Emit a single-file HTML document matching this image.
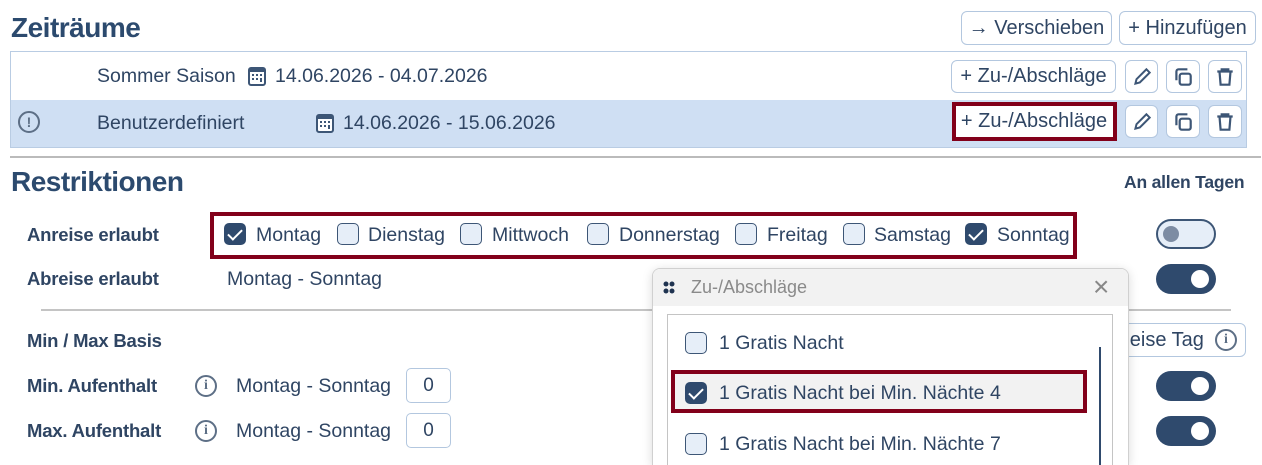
<!DOCTYPE html>
<html><head><meta charset="utf-8"><style>
*{box-sizing:border-box;margin:0;padding:0}
body{width:1262px;height:465px;overflow:hidden;background:#fff;font-family:"Liberation Sans",sans-serif;color:#2f4563;position:relative}
.a{position:absolute;white-space:nowrap}
.h{font-size:28px;font-weight:bold;color:#2c4a6e;letter-spacing:-0.5px}
.t{font-size:19.5px;line-height:22px}
.b{font-size:18.5px;font-weight:bold;line-height:20px;letter-spacing:-0.2px}
.btn{position:absolute;border:1px solid #b3c7df;border-radius:6px;background:#fff;font-size:20px;display:flex;align-items:center;justify-content:center;color:#2f4563;white-space:nowrap}
.cb{position:absolute;width:22px;height:22px;border:1.5px solid #3d5676;border-radius:5px;background:#e6eef8}
.cb.on{background:#2f4a6d;border-color:#2f4a6d}
.cb.on::after{content:"";position:absolute;left:6px;top:2px;width:6px;height:12px;border:solid #fff;border-width:0 2px 2px 0;transform:rotate(45deg)}
.tg{position:absolute;width:60px;height:30px;border-radius:15px;background:#2f4a6d}
.tg::after{content:"";position:absolute;right:7px;top:6px;width:18px;height:18px;border-radius:50%;background:#fff}
.info{position:absolute;width:22px;height:22px;border:2px solid #5d6f86;border-radius:50%;font-size:14px;font-weight:bold;text-align:center;line-height:18px;color:#5d6f86;font-family:"Liberation Serif",serif}
.inp{position:absolute;width:45px;height:35px;border:1px solid #b3c7df;border-radius:5px;font-size:19px;text-align:center;line-height:33px}
.red{position:absolute;border:4px solid #82001a}
</style></head><body>
<div class="a h" style="left:11px;top:12px">Zeiträume</div>
<div class="btn" style="left:961px;top:11px;width:151px;height:34px">→&nbsp;Verschieben</div>
<div class="btn" style="left:1119px;top:11px;width:137px;height:34px">+&nbsp;Hinzufügen</div>
<div class="a" style="left:10px;top:51px;width:1237px;height:97px;border:1px solid #b9cce3"></div>
<div class="a" style="left:11px;top:100px;width:1235px;height:47px;background:#cfdff3"></div>
<div class="a t" style="left:97px;top:65px">Sommer Saison</div>
<svg class="a" style="left:248px;top:66px" width="18" height="20" viewBox="0 0 18 20"><rect x="1" y="2" width="16" height="17" rx="2" fill="#fff" stroke="#3d5676" stroke-width="2"/><rect x="1" y="2" width="16" height="4" fill="#3d5676"/><g fill="#3d5676"><rect x="4" y="8" width="2" height="2"/><rect x="8" y="8" width="2" height="2"/><rect x="12" y="8" width="2" height="2"/><rect x="4" y="12" width="2" height="2"/><rect x="8" y="12" width="2" height="2"/><rect x="12" y="12" width="2" height="4"/></g></svg>
<div class="a t" style="left:275px;top:65px">14.06.2026 - 04.07.2026</div>
<div class="btn" style="left:951px;top:60px;width:165px;height:33px">+ Zu-/Abschläge</div>
<div class="btn" style="left:1125px;top:60px;width:33px;height:33px"><svg width="22" height="22" viewBox="0 0 20 20"><path d="M4 16l1-4 9-9 3 3-9 9z" fill="none" stroke="#3d5676" stroke-width="1.8"/></svg></div>
<div class="btn" style="left:1166px;top:60px;width:34px;height:33px"><svg width="22" height="22" viewBox="0 0 20 20"><rect x="7" y="7" width="10" height="10" rx="2" fill="none" stroke="#3d5676" stroke-width="2"/><path d="M4 13V5a2 2 0 012-2h8" fill="none" stroke="#3d5676" stroke-width="2"/></svg></div>
<div class="btn" style="left:1208px;top:60px;width:34px;height:33px"><svg width="22" height="22" viewBox="0 0 20 20"><path d="M3 5h14M7 5V3h6v2M5 5l1 12h8l1-12" fill="none" stroke="#3d5676" stroke-width="2"/></svg></div>
<div class="a" style="left:18px;top:111px;width:22px;height:22px;border:2px solid #5d6f86;border-radius:50%;text-align:center;font-weight:bold;font-size:14px;line-height:18px;color:#5d6f86">!</div>
<div class="a t" style="left:97px;top:112px">Benutzerdefiniert</div>
<svg class="a" style="left:316px;top:113px" width="18" height="20" viewBox="0 0 18 20"><rect x="1" y="2" width="16" height="17" rx="2" fill="#fff" stroke="#3d5676" stroke-width="2"/><rect x="1" y="2" width="16" height="4" fill="#3d5676"/><g fill="#3d5676"><rect x="4" y="8" width="2" height="2"/><rect x="8" y="8" width="2" height="2"/><rect x="12" y="8" width="2" height="2"/><rect x="4" y="12" width="2" height="2"/><rect x="8" y="12" width="2" height="2"/><rect x="12" y="12" width="2" height="4"/></g></svg>
<div class="a t" style="left:343px;top:112px">14.06.2026 - 15.06.2026</div>
<div class="btn" style="left:952px;top:104px;width:164px;height:35px">+ Zu-/Abschläge</div>
<div class="red" style="left:952px;top:102px;width:165px;height:39px"></div>
<div class="btn" style="left:1125px;top:105px;width:33px;height:33px"><svg width="22" height="22" viewBox="0 0 20 20"><path d="M4 16l1-4 9-9 3 3-9 9z" fill="none" stroke="#3d5676" stroke-width="1.8"/></svg></div>
<div class="btn" style="left:1166px;top:105px;width:34px;height:33px"><svg width="22" height="22" viewBox="0 0 20 20"><rect x="7" y="7" width="10" height="10" rx="2" fill="none" stroke="#3d5676" stroke-width="2"/><path d="M4 13V5a2 2 0 012-2h8" fill="none" stroke="#3d5676" stroke-width="2"/></svg></div>
<div class="btn" style="left:1208px;top:105px;width:34px;height:33px"><svg width="22" height="22" viewBox="0 0 20 20"><path d="M3 5h14M7 5V3h6v2M5 5l1 12h8l1-12" fill="none" stroke="#3d5676" stroke-width="2"/></svg></div>
<div class="a" style="left:10px;top:156px;width:1251px;height:2px;background:#bbb"></div>

<div class="a h" style="left:11px;top:166px">Restriktionen</div>
<div class="a b" style="left:1124px;top:172px;font-size:17.5px">An allen Tagen</div>
<div class="a b" style="left:27px;top:225px">Anreise erlaubt</div>
<div class="red" style="left:210px;top:212px;width:867px;height:47px"></div>
<div class="cb on" style="left:224px;top:223px"></div><div class="a t" style="left:256px;top:224px">Montag</div>
<div class="cb" style="left:337px;top:223px"></div><div class="a t" style="left:368px;top:224px">Dienstag</div>
<div class="cb" style="left:460px;top:223px"></div><div class="a t" style="left:492px;top:224px">Mittwoch</div>
<div class="cb" style="left:587px;top:223px"></div><div class="a t" style="left:619px;top:224px">Donnerstag</div>
<div class="cb" style="left:735px;top:223px"></div><div class="a t" style="left:767px;top:224px">Freitag</div>
<div class="cb" style="left:843px;top:223px"></div><div class="a t" style="left:874px;top:224px">Samstag</div>
<div class="cb on" style="left:965px;top:223px"></div><div class="a t" style="left:997px;top:224px">Sonntag</div>
<div class="a" style="left:1156px;top:219px;width:60px;height:30px;border-radius:15px;background:#e6eef8;border:2px solid #3d5676"><div style="position:absolute;left:5px;top:5px;width:16px;height:16px;border-radius:50%;background:#7d8ca3"></div></div>
<div class="a b" style="left:27px;top:269px">Abreise erlaubt</div>
<div class="a t" style="left:227px;top:268px">Montag - Sonntag</div>
<div class="tg" style="left:1156px;top:264px"></div>
<div class="a" style="left:41px;top:309px;width:1190px;height:2px;background:#c4c4c4"></div>
<div class="a b" style="left:27px;top:331px">Min / Max Basis</div>
<div class="btn" style="left:1090px;top:323px;width:156px;height:34px;justify-content:flex-end;padding-right:8px">eise Tag&nbsp;&nbsp;<span class="info" style="position:relative;display:inline-block">i</span></div>
<div class="a b" style="left:27px;top:376px">Min. Aufenthalt</div>
<div class="info" style="left:195px;top:375px">i</div>
<div class="a t" style="left:236px;top:375px">Montag - Sonntag</div>
<div class="inp" style="left:406px;top:368px">0</div>
<div class="tg" style="left:1156px;top:371px"></div>
<div class="a b" style="left:27px;top:421px">Max. Aufenthalt</div>
<div class="info" style="left:195px;top:420px">i</div>
<div class="a t" style="left:236px;top:420px">Montag - Sonntag</div>
<div class="inp" style="left:406px;top:413px">0</div>
<div class="tg" style="left:1156px;top:416px"></div>

<div class="a" style="left:652px;top:268px;width:477px;height:197px;background:#fff;border:1px solid #d0d0d0;border-bottom:none;border-radius:8px 8px 0 0;box-shadow:0 2px 10px rgba(0,0,0,.15);overflow:hidden">
 <div style="height:37px;background:#f2f2f2;position:relative">
  <svg style="position:absolute;left:10px;top:12px" width="12" height="14" viewBox="0 0 12 14"><g fill="#1f3350"><circle cx="3" cy="3" r="2.5"/><circle cx="9" cy="3" r="2.5"/><circle cx="3" cy="10" r="2.5"/><circle cx="9" cy="10" r="2.5"/></g></svg>
  <div style="position:absolute;left:38px;top:8px;font-size:18px;color:#8a8a8a">Zu-/Abschläge</div>
  <div style="position:absolute;left:440px;top:2px;font-size:28px;color:#888;font-weight:300">×</div>
 </div>
 <div style="position:absolute;left:14px;top:45px;width:446px;height:160px;border:1px solid #c4c4c4;overflow:hidden">
  <div class="cb" style="left:17px;top:17px"></div><div class="a t" style="left:51px;top:17px">1 Gratis Nacht</div>
  <div class="a" style="left:3px;top:55px;width:416px;height:43px;background:#f2f2f2;border:4px solid #82001a"></div>
  <div class="cb on" style="left:17px;top:67px"></div><div class="a t" style="left:51px;top:67px">1 Gratis Nacht bei Min. Nächte 4</div>
  <div class="cb" style="left:17px;top:118px"></div><div class="a t" style="left:51px;top:118px">1 Gratis Nacht bei Min. Nächte 7</div>
  <div class="a" style="left:431px;top:32px;width:2px;height:128px;background:#2f4a6d"></div>
 </div>
</div>
</body></html>
